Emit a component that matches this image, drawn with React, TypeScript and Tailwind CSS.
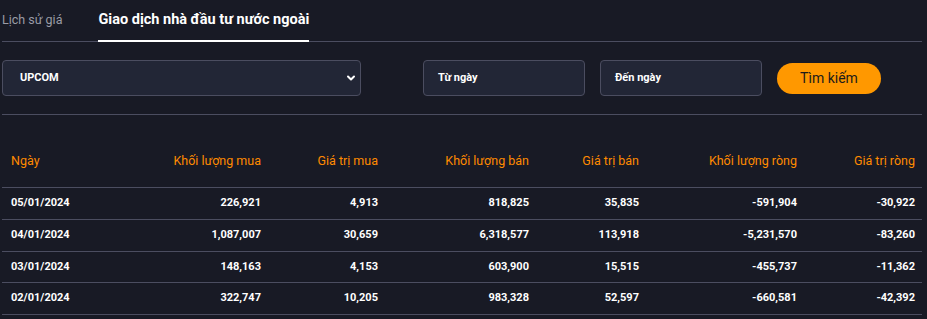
import { ChevronDown } from 'lucide-react';

const rows = [
  ['05/01/2024', '226,921', '4,913', '818,825', '35,835', '-591,904', '-30,922'],
  ['04/01/2024', '1,087,007', '30,659', '6,318,577', '113,918', '-5,231,570', '-83,260'],
  ['03/01/2024', '148,163', '4,153', '603,900', '15,515', '-455,737', '-11,362'],
  ['02/01/2024', '322,747', '10,205', '983,328', '52,597', '-660,581', '-42,392'],
];

const headers = ['Ngày', 'Khối lượng mua', 'Giá trị mua', 'Khối lượng bán', 'Giá trị bán', 'Khối lượng ròng', 'Giá trị ròng'];

const cols = 'grid grid-cols-[138px_128px_117px_151px_110px_158px_118px]';

export default function App() {
  return (
    <div className="min-h-screen bg-[#181a25] pl-[2px] pr-[5px] font-['Roboto',sans-serif] text-white">
      {/* tabs */}
      <div className="flex h-[42px] items-end border-b border-[#4b4d60]">
        <div className="flex h-full items-center pb-px text-[12.5px] text-[#9a9ca6]">Lịch sử giá</div>
        <div className="relative ml-[36px] flex h-full items-center pb-px text-[14.5px] font-bold text-white">
          Giao dịch nhà đầu tư nước ngoài
          <div className="absolute bottom-[-1px] left-0 right-0 h-[2px] bg-white" />
        </div>
      </div>

      {/* filters */}
      <div className="flex items-start border-b border-[#4b4d60] pt-[18px] pb-[18px]">
        <div className="flex h-[36px] w-[359px] items-center justify-between rounded-[4px] border border-[#4b4d60] bg-[#222636] pl-[17px] pr-[3px]">
          <span className="text-[11px] font-bold">UPCOM</span>
          <ChevronDown size={12} strokeWidth={4} />
        </div>
        <div className="ml-[62px] flex h-[36px] w-[162px] items-center rounded-[4px] border border-[#4b4d60] bg-[#222636] pl-[14px] text-[11px] font-bold">
          Từ ngày
        </div>
        <div className="ml-[15px] flex h-[36px] w-[162px] items-center rounded-[4px] border border-[#4b4d60] bg-[#222636] pl-[14px] text-[11px] font-bold">
          Đến ngày
        </div>
        <button className="ml-[15px] mt-[3px] flex h-[31px] w-[104px] items-center justify-center rounded-full bg-[#ff9800] text-[14px] text-[#1b1b1b]">
          Tìm kiếm
        </button>
      </div>

      {/* table */}
      <div className="mt-[20px]">
        <div className={`${cols} h-[53px] items-center border-b border-[#4b4d60] text-[12.5px] text-[#ff8a00]`}>
          {headers.map((h, i) => (
            <div key={h} className={i === 0 ? 'pl-[9px]' : 'pr-[7px] text-right'}>
              {h}
            </div>
          ))}
        </div>
        {rows.map((r) => (
          <div key={r[0]} className={`${cols} h-[31.75px] items-center border-b border-[#4b4d60] text-[11px] font-bold`}>
            {r.map((c, i) => (
              <div key={i} className={i === 0 ? 'pl-[9px]' : 'pr-[7px] text-right'}>
                {c}
              </div>
            ))}
          </div>
        ))}
      </div>
    </div>
  );
}
